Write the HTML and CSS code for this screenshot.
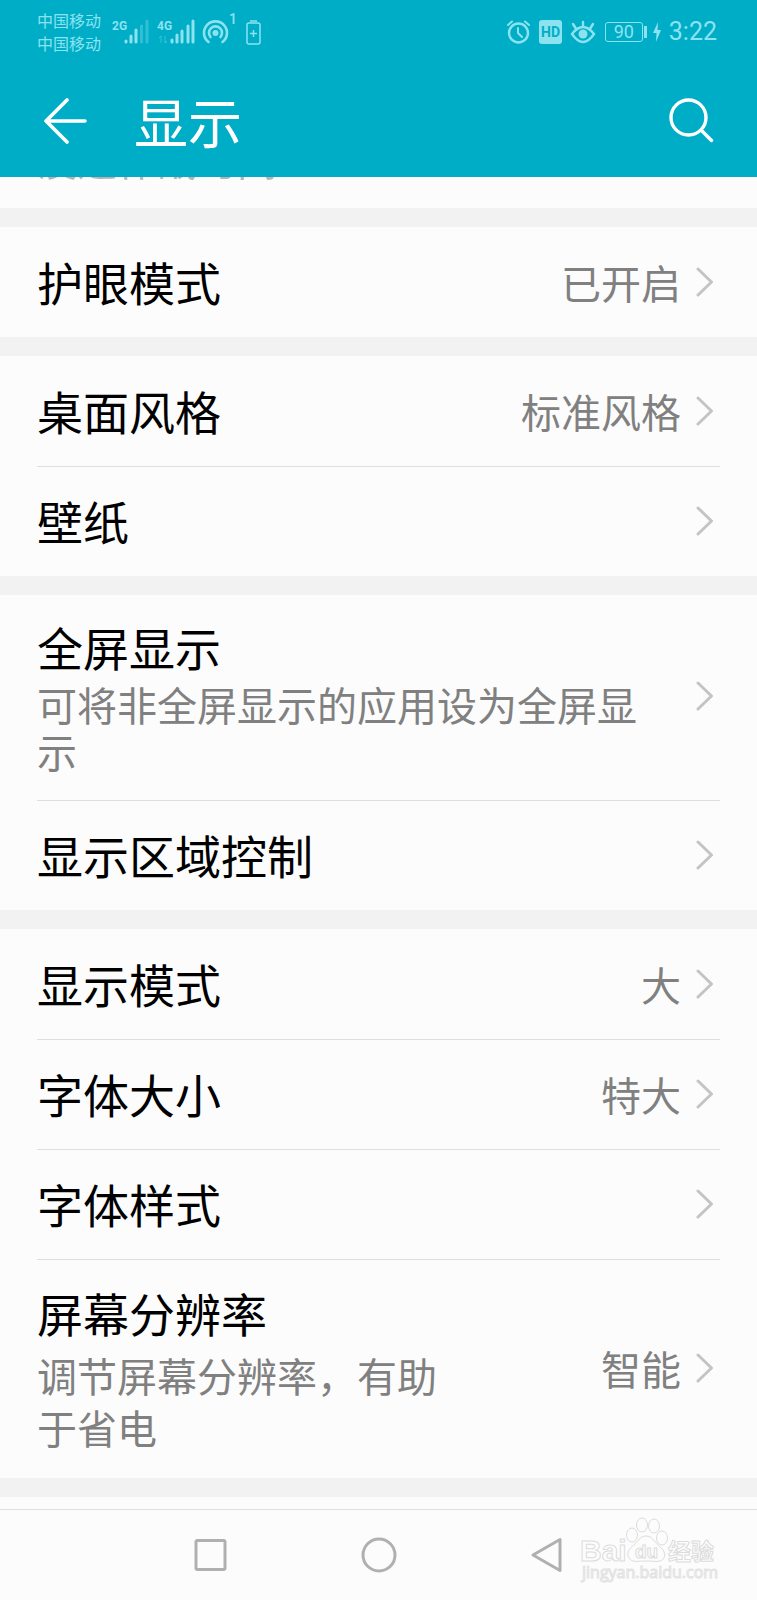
FILE: index.html
```html
<!DOCTYPE html>
<html lang="zh-CN">
<head>
<meta charset="utf-8">
<meta name="viewport" content="width=device-width, initial-scale=1">
<title>显示</title>
<link rel="stylesheet" href="styles.css">
</head>
<body>
<svg class="defs" aria-hidden="true">
  <symbol id="chevron" viewBox="0 0 18 32"><path d="M2 3 L15.500 16 L2 29" fill="none" stroke="currentColor" stroke-width="3" stroke-linecap="round" stroke-linejoin="round"/></symbol>
</svg>
<header class="header">
  <div class="status">
    <div class="carriers"><span>中国移动</span><span>中国移动</span></div>
    <svg class="signals" viewBox="0 -8 154 48" aria-hidden="true">
      <g class="net"><text x="0" y="14">2G</text><text x="45" y="14">4G</text></g>
      <g stroke="currentColor" stroke-width="3" stroke-linecap="round">
        <path d="M14 25v1M19 20v6M24 14v12"/>
        <path d="M29.500 10v16M35 5v21" opacity=".35"/>
        <path d="M60 24v2M65 19v7M70 15v11M76 10v16M81 5v21"/>
      </g>
      <path d="M49 20v7M47 22l2-2M53 20v7M55 25l-2 2" fill="none" stroke="currentColor" opacity=".4"/>
      <g fill="none" stroke="currentColor" stroke-width="2.600" stroke-linecap="round">
        <path d="M96.500 26a11.500 11.500 0 1 1 14 0"/>
        <path d="M98.500 21a6.500 6.500 0 1 1 10 0"/>
      </g>
      <circle cx="103.500" cy="17" r="3" fill="currentColor"/>
      <text class="hot" x="117" y="8">1</text>
      <g fill="none" stroke="currentColor" stroke-width="1.500">
        <rect x="135" y="7" width="13" height="21" rx="2"/>
        <path d="M138 5h7M141.500 14v7M138 17.500h7"/>
      </g>
    </svg>
    <div class="status-right">
      <svg class="indicators" viewBox="0 0 90 26" aria-hidden="true">
        <g fill="none" stroke="currentColor" stroke-width="2.400" stroke-linecap="round">
          <circle cx="12.500" cy="14" r="9.500"/>
          <path d="M12 9v5l4 4M2 6l4-3.500M19 2.500l4 3.500" stroke-width="2"/>
        </g>
        <rect x="33" y="1" width="23" height="24" rx="3" fill="currentColor"/>
        <text class="hd" x="44.500" y="18" text-anchor="middle">HD</text>
        <g fill="none" stroke="currentColor" stroke-width="2.400" stroke-linecap="round">
          <path d="M66 15q11-14 22 0q-11 16-22 0zM77 3v4M67 5l2.500 4M87 5l-2.500 4"/>
        </g>
        <circle cx="77" cy="15" r="4.500" fill="currentColor"/>
      </svg>
      <span class="battery">90</span>
      <svg class="bolt" viewBox="0 0 8 20" aria-hidden="true"><path d="M5 0L0 11h3.500L3 20L8 8H4.500z" fill="currentColor"/></svg>
      <time class="clock">3:22</time>
    </div>
  </div>
  <div class="bar">
    <button class="icon-btn" aria-label="返回"><svg class="back" viewBox="0 0 46 46" aria-hidden="true"><path d="M25 2L4 23L25 44M4 23H43" fill="none" stroke="currentColor" stroke-width="3.600" stroke-linecap="round" stroke-linejoin="round"/></svg></button>
    <h1 class="title">显示</h1>
    <button class="icon-btn" aria-label="搜索"><svg class="search" viewBox="0 0 46 46" aria-hidden="true"><g fill="none" stroke="currentColor" stroke-width="3.400" stroke-linecap="round"><circle cx="19.500" cy="19.500" r="17.500"/><path d="M32 32L42.500 42.500"/></g></svg></button>
  </div>
</header>
<main class="list">
  <section class="group clipped"><p class="desc">没选作战时间</p></section>
  <section class="group">
    <button class="row"><span class="label">护眼模式</span><span class="value">已开启</span><svg class="chev"><use href="#chevron"/></svg></button>
  </section>
  <section class="group">
    <button class="row"><span class="label">桌面风格</span><span class="value">标准风格</span><svg class="chev"><use href="#chevron"/></svg></button>
    <button class="row"><span class="label">壁纸</span><svg class="chev"><use href="#chevron"/></svg></button>
  </section>
  <section class="group">
    <button class="row full"><span class="text"><span class="label">全屏显示</span><span class="desc">可将非全屏显示的应用设为全屏显示</span></span><svg class="chev"><use href="#chevron"/></svg></button>
    <button class="row"><span class="label">显示区域控制</span><svg class="chev"><use href="#chevron"/></svg></button>
  </section>
  <section class="group">
    <button class="row"><span class="label">显示模式</span><span class="value">大</span><svg class="chev"><use href="#chevron"/></svg></button>
    <button class="row"><span class="label">字体大小</span><span class="value">特大</span><svg class="chev"><use href="#chevron"/></svg></button>
    <button class="row"><span class="label">字体样式</span><svg class="chev"><use href="#chevron"/></svg></button>
    <button class="row resolution"><span class="text"><span class="label">屏幕分辨率</span><span class="desc">调节屏幕分辨率，有助于省电</span></span><span class="value">智能</span><svg class="chev"><use href="#chevron"/></svg></button>
  </section>
</main>
<nav class="nav" aria-label="系统导航">
  <button class="nav-btn" aria-label="最近任务"><svg viewBox="0 0 36 36"><rect x="3" y="3.500" width="29" height="29" rx="1.500"/></svg></button>
  <button class="nav-btn" aria-label="主屏幕"><svg viewBox="0 0 36 36"><circle cx="18" cy="18" r="16"/></svg></button>
  <button class="nav-btn" aria-label="返回"><svg viewBox="0 0 36 36"><path d="M31 2.500V33.500L4 18z"/></svg></button>
  <svg class="watermark" viewBox="0 0 144 72" role="img" aria-label="Baidu 经验">
    <g class="wm">
      <text class="wm-big" x="3" y="45">Bai</text>
      <path d="M69 20c-6 0-8 5-12 9c-5 4-8 8-5 13c3 5 9 3 17 3s15 2 18-3c2-5-1-9-6-13c-4-4-6-9-12-9z"/>
      <ellipse cx="55" cy="19" rx="5.500" ry="7"/><ellipse cx="65" cy="9" rx="5.500" ry="7"/><ellipse cx="77" cy="10" rx="5.500" ry="7"/><ellipse cx="85" cy="22" rx="5.500" ry="7"/>
      <text class="wm-du" x="58" y="42">du</text>
      <text class="wm-cn" x="91" y="44">经验</text>
      <text class="wm-url" x="5" y="62">jingyan.baidu.com</text>
    </g>
  </svg>
</nav>
</body>
</html>
```

FILE: styles.css
```css
* { box-sizing: border-box; }
body {
  margin: 0;
  min-height: 100vh;
  display: flex;
  flex-direction: column;
  background: #fcfcfc;
  font-family: "Noto Sans CJK SC", sans-serif;
  font-weight: 400;
  color: #000;
}
button { margin: 0; padding: 0; border: 0; background: none; font: inherit; color: inherit; cursor: pointer; }
svg { display: block; flex: none; }
.defs { position: absolute; width: 0; height: 0; }

.header { background: #00adc7; color: #fff; padding-bottom: 13px; }
.status { display: flex; align-items: center; height: 64px; padding: 0 40px 0 37px; color: #8ce3ef; }
.carriers { display: flex; flex-direction: column; font-size: 16px; line-height: 23px; }
.signals { width: 154px; height: 48px; margin-left: 11px; }
.net text { font: 700 12px Roboto, sans-serif; fill: currentColor; }
.hot { font: 500 14px Roboto, sans-serif; fill: currentColor; }
.status-right { display: flex; align-items: center; margin-left: auto; }
.indicators { width: 90px; height: 26px; }
.hd { font: 700 14px Roboto, sans-serif; fill: #00adc7; }
.battery {
  position: relative;
  width: 38px;
  height: 20px;
  margin-left: 9px;
  border: 1px solid currentColor;
  border-radius: 3px;
  font: 400 18px/18px Roboto, sans-serif;
  text-align: center;
}
.battery::after { content: ""; position: absolute; top: 3px; right: -5px; width: 3px; height: 12px; background: currentColor; }
.bolt { width: 8px; height: 20px; margin-left: 10px; }
.clock { margin-left: 8px; font: 400 25px/30px Roboto, sans-serif; }

.bar { display: flex; align-items: center; height: 87px; padding: 0 42px; margin-top: 13px; }
.icon-btn { color: #fff; }
.back, .search { width: 46px; height: 46px; }
.title { flex: 1; margin: 0 0 0 46px; font-size: 54px; line-height: 60px; font-weight: 400; }

.group { border-bottom: 19px solid #f2f2f2; }
.row { display: flex; align-items: center; width: 100%; min-height: 110px; padding: 0 37px; text-align: left; position: relative; }
.row + .row::before { content: ""; position: absolute; top: 0; left: 37px; right: 37px; height: 1px; background: #dedede; }
.label { font-size: 46px; line-height: 58px; }
.row > .label, .text { flex: 1; }
.row > .label { padding-bottom: 2px; }
.text { display: flex; flex-direction: column; }
.value, .desc { font-size: 40px; color: #808080; }
.value { line-height: 50px; }
.desc { margin: 0; line-height: 47px; }
.chev { width: 18px; height: 32px; margin: 0 6px 0 15px; color: #c4c4c4; }
.full { padding-top: 22px; padding-bottom: 25px; }
.full .desc { margin-top: 6px; max-width: 610px; }
.resolution { padding-top: 24px; padding-bottom: 25px; }
.resolution .desc { margin-top: 8px; line-height: 52px; max-width: 410px; }
.clipped { height: 50px; overflow: hidden; display: flex; align-items: flex-end; padding: 0 37px 25px; }
.clipped .desc { color: #b4b4b4; }

.nav { position: relative; flex: 1; margin-top: 12px; border-top: 1px solid #dedede; display: flex; justify-content: center; align-items: center; gap: 132px; min-height: 90px; }
.nav-btn svg { width: 36px; height: 36px; fill: none; stroke: #b0b0b0; stroke-width: 3; stroke-linejoin: round; }
.watermark { position: absolute; right: 36px; top: 6px; width: 144px; height: 72px; }
.wm { fill: #fcfcfc; stroke: #dcdcdc; stroke-width: 1; }
.wm text { font-family: "Liberation Sans", "Noto Sans CJK SC", sans-serif; font-weight: 700; }
.wm .wm-big { font-size: 30px; }
.wm .wm-du { font-size: 19px; }
.wm .wm-cn { font-size: 23px; }
.wm .wm-url { font-family: "Open Sans", sans-serif; font-size: 16px; font-weight: 400; stroke: #e2e2e2; }
```
